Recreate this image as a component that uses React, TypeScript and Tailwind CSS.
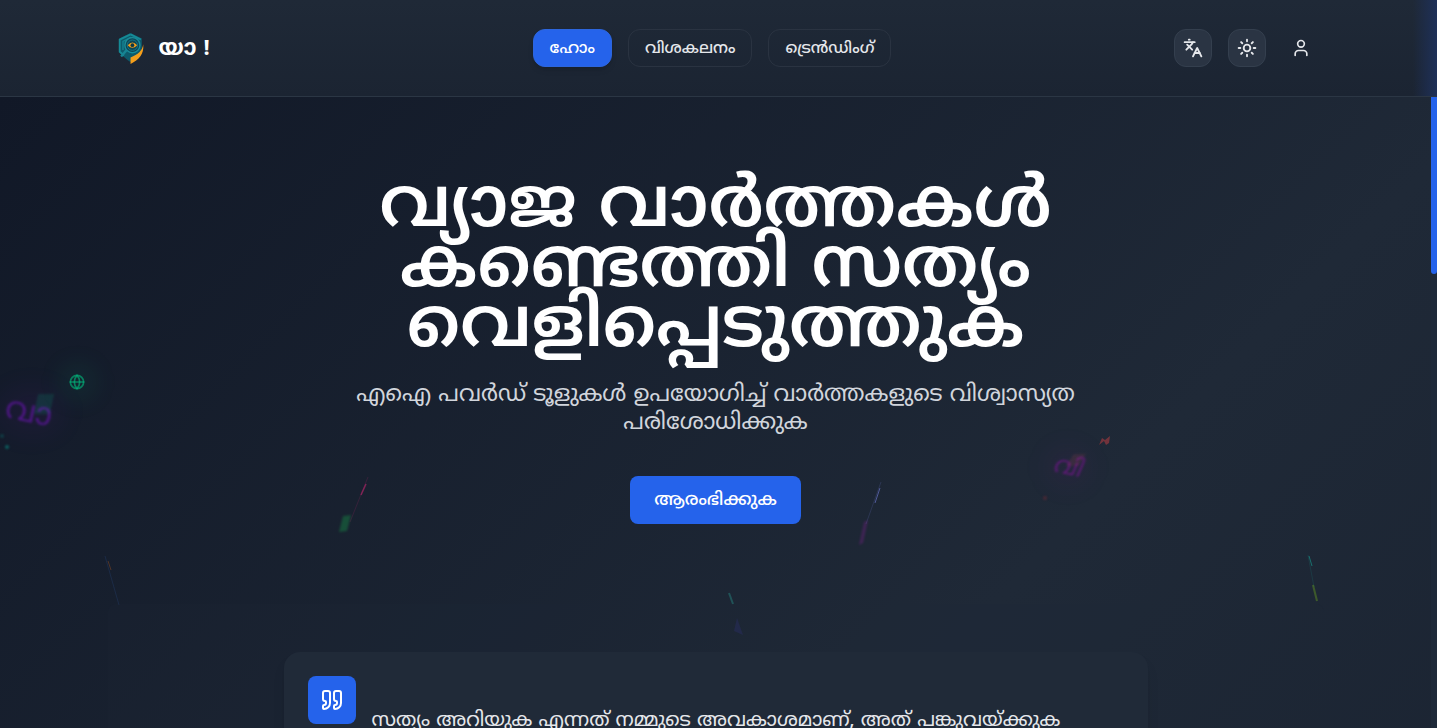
import { Languages, Sun, User, Quote, Globe } from 'lucide-react'

const NAV_ITEMS = [
  { label: 'ഹോം', href: '#home', active: true },
  { label: 'വിശകലനം', href: '#analyze', active: false },
  { label: 'ട്രെൻഡിംഗ്', href: '#trending', active: false },
]

function Logo() {
  return (
    <svg viewBox="2 1 29 34" className="h-8 w-7" aria-hidden="true">
      <path d="M16 2 L28 8 V18 C28 25 23 30 16 33 C9 28 4 24 4 18 V8 Z" fill="#0e5a6b" />
      <path d="M16 3.500 L27 9 M16 3.500 L4.500 9 V22 L9 26" fill="none" stroke="#168a96" strokeWidth="2" />
      <path d="M8 20 V11 L16 7 L24 11" fill="none" stroke="#158291" strokeWidth="1.500" />
      <path d="M29.500 14 C28.500 21 24 25 16 28 V35 C25 30 30.500 25 29.500 14 Z" fill="#f59e1b" />
      <circle cx="18" cy="15" r="8" fill="#0d4656" stroke="#1a8c99" strokeWidth="1.500" />
      <path d="M12 20 L6 27" stroke="#178493" strokeWidth="2.500" />
      <circle cx="18" cy="15" r="5.500" fill="none" stroke="#15788a" />
      <path d="M13 15 Q18 9.500 23 15 Q18 20.500 13 15 Z" fill="#f59e1b" />
      <circle cx="18" cy="15" r="2" fill="#0b3947" />
    </svg>
  )
}

function Header() {
  return (
    <header className="relative z-20 border-b border-[#2b3644] bg-gradient-to-b from-[#1f2937] to-[#1b2432]">
      <div className="absolute inset-y-0 right-0 w-6 bg-gradient-to-r from-transparent to-[#1e3058]" />
      <div className="mx-auto flex h-24 max-w-[1204px] items-center justify-between">
        <a href="#home" className="flex w-[133px] items-center gap-3.5">
          <Logo />
          <span className="pt-1 text-[22px] leading-8 font-bold text-white">യാ !</span>
        </a>
        <nav className="flex items-center gap-4">
          {NAV_ITEMS.map(item => (
            <a
              key={item.label}
              href={item.href}
              className={
                item.active
                  ? 'flex h-[38px] items-center rounded-xl border border-[#2d66dd] bg-[#2563eb] px-4 pt-0.5 text-base font-medium text-white shadow-md'
                  : 'flex h-[38px] items-center rounded-xl border border-[#2a3341] px-4 pt-0.5 text-base font-medium text-gray-200'
              }
            >
              {item.label}
            </a>
          ))}
        </nav>
        <div className="flex items-center gap-4 text-gray-200">
          <button aria-label="Language" className="flex size-[38px] items-center justify-center rounded-xl border border-[#343f4e] bg-[#2a3443]">
            <Languages className="size-5" strokeWidth={2.25} />
          </button>
          <button aria-label="Theme" className="flex size-[38px] items-center justify-center rounded-xl border border-[#343f4e] bg-[#2a3443]">
            <Sun className="size-5" strokeWidth={2.25} />
          </button>
          <button aria-label="Account" className="flex size-[38px] items-center justify-center">
            <User className="size-5" />
          </button>
        </div>
      </div>
    </header>
  )
}

function FloatingShapes() {
  return (
    <div className="pointer-events-none absolute inset-0 overflow-hidden" aria-hidden="true">
      <div className="absolute left-9 top-[297px] h-5 w-4 -skew-x-12 bg-emerald-500/15 blur-[1px]" />
      <div className="absolute left-0 top-[290px] h-12 w-16 rounded-full bg-purple-700/5 blur-md" />
      <span className="absolute left-[5px] top-[293px] rotate-12 text-[32px] text-purple-600/40 blur-[1px]">വാ</span>
      <div className="absolute left-[62px] top-[269px] size-8 rounded-full bg-emerald-500/10 blur-md" />
      <Globe className="absolute left-[69px] top-[277px] size-4 text-emerald-500/60" strokeWidth={2.5} />
      <div className="absolute left-[5px] top-[348px] size-1 rounded-full bg-teal-500/40 blur-[1px]" />
      <div className="absolute left-0 top-[337px] size-1 rounded-full bg-teal-500/20 blur-[1px]" />

      <div className="absolute left-[1070px] top-[357px] h-3 w-3 -skew-x-[30deg] bg-red-400/10 blur-[1px]" />
      <div className="absolute left-[1046px] top-[350px] h-10 w-11 rounded-full bg-fuchsia-700/5 blur-md" />
      <span className="absolute left-[1054px] top-[356px] -skew-x-12 rotate-12 text-2xl text-fuchsia-600/35 blur-[1px]">വി</span>
      <svg viewBox="0 0 14 10" className="absolute left-[1098px] top-[339px] h-[10px] w-[14px]">
        <path d="M1 9 L4 2 L7 4 L12 0 L11 7 L8 9 L6 5 Z" fill="#ef4444" opacity=".4" />
      </svg>
      <div className="absolute left-[1043px] top-[399px] size-1 rounded-full bg-red-500/20 blur-[1px]" />

      <svg viewBox="0 0 1437 631" className="absolute left-0 top-0 h-[631px] w-[1437px]">
        <path d="M368 380 L350 425" stroke="#db2777" strokeWidth="1" opacity=".15" />
        <path d="M366 387 L361 398" stroke="#db2777" strokeWidth="1.500" opacity=".5" />
        <path d="M343 419 L351 418 L347 434 L339 435 Z" fill="#16a34a" opacity=".35" className="blur-[1px]" />
        <path d="M881 385 L866 427" stroke="#818cf8" opacity=".15" />
        <path d="M880 391 L875 406" stroke="#818cf8" opacity=".5" />
        <path d="M864 425 L868 423 L863 446 L859 448 Z" fill="#a21caf" opacity=".25" className="blur-[1px]" />
        <path d="M105 459 L119 508" stroke="#3b82f6" opacity=".12" />
        <path d="M108 464 L111 473" stroke="#f97316" opacity=".25" />
        <path d="M1308 458 L1314 490" stroke="#14b8a6" opacity=".12" />
        <path d="M1309 459 L1312 469" stroke="#14b8a6" opacity=".5" />
        <path d="M1313 488 L1317 504" stroke="#84cc16" strokeWidth="2" opacity=".3" />
        <path d="M729 496 L733 507" stroke="#2dd4bf" strokeWidth="2" opacity=".25" />
        <path d="M737 521 L743 538 L734 534 Z" fill="#4f46e5" opacity=".15" />
      </svg>
    </div>
  )
}

export default function App() {
  return (
    <div className="flex h-screen flex-col overflow-hidden bg-[#1f2937] font-['Noto_Sans_Malayalam','Noto_Sans',sans-serif]">
      <Header />
      <div className="relative flex min-h-0 flex-1 overflow-hidden">
        <main className="relative flex-1 overflow-hidden bg-[linear-gradient(135deg,#111827_0px,#1f2937_1060px,#111827_2850px)]">
          <FloatingShapes />
          <section className="relative mx-auto flex max-w-3xl flex-col items-center pt-[83px] text-center">
            <h1 className="text-[70px] leading-[60px] font-semibold text-white">
              വ്യാജ വാർത്തകൾ<br />കണ്ടെത്തി സത്യം<br />വെളിപ്പെടുത്തുക
            </h1>
            <p className="mt-[22px] text-[23px] leading-7 text-gray-300">
              എഐ പവർഡ് ടൂളുകൾ ഉപയോഗിച്ച് വാർത്തകളുടെ വിശ്വാസ്യത<br />പരിശോധിക്കുക
            </p>
            <button className="mt-[38px] h-12 rounded-lg bg-[#2563eb] px-6 pt-0.5 text-lg font-medium text-white">
              ആരംഭിക്കുക
            </button>
          </section>
          <section className="relative mx-auto mt-20 max-w-[1216px] rounded-lg bg-[#1f2937]/20 pt-12">
            <blockquote className="mx-auto flex h-72 max-w-[864px] items-start gap-4 rounded-2xl bg-[#202a38] p-6 shadow-lg">
              <div className="flex size-12 shrink-0 items-center justify-center rounded-lg bg-[#2563eb] text-white">
                <Quote className="size-6" />
              </div>
              <p className="pt-8 text-xl leading-7 text-gray-200">
                സത്യം അറിയുക എന്നത് നമ്മുടെ അവകാശമാണ്, അത് പങ്കുവയ്ക്കുക
              </p>
            </blockquote>
          </section>
        </main>
        <div className="w-[6px] bg-gray-800">
          <div className="h-[177px] rounded-b bg-[#2563eb]" />
        </div>
      </div>
    </div>
  )
}
